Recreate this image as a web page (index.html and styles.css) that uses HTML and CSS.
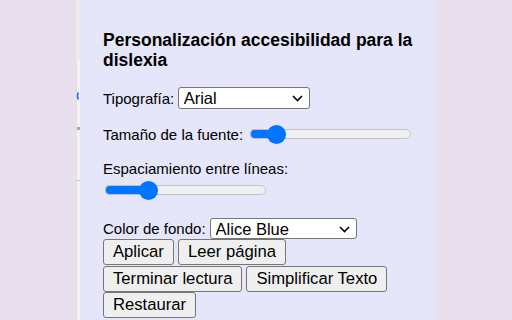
FILE: index.html
```html
<!DOCTYPE html>
<html lang="es">
<head>
<meta charset="utf-8">
<title>Personalización accesibilidad para la dislexia</title>
<link rel="stylesheet" href="styles.css">
</head>
<body>
<div class="page">
  <div class="gutter"></div>
  <div class="strip">
    <span class="strip-top"></span>
    <svg class="strip-mark" width="3" height="8" viewBox="0 0 3 8"><path d="M2.5 0.5 Q0.5 4 2.5 7.5" fill="none" stroke="#1a6ee6" stroke-width="1.6"/></svg>
    <span class="strip-tick"></span>
    <span class="strip-line"></span>
  </div>
  <main class="panel">
    <h3 class="title">Personalización accesibilidad para la dislexia</h3>

    <div class="row row-font">
      <label class="label" for="font">Tipografía:</label>
      <span class="select-wrap sel-font">
        <select id="font" class="select">
          <option>Arial</option>
          <option>Verdana</option>
          <option>OpenDyslexic</option>
        </select>
        <svg class="chev" width="11" height="7" viewBox="0 0 11 7"><path d="M1 1 L5.5 5.5 L10 1" fill="none" stroke="#000" stroke-width="1.6"/></svg>
      </span>
    </div>

    <div class="row row-size">
      <label class="label" for="size">Tamaño de la fuente:</label>
      <input id="size" class="range range-size" type="range" min="0" max="100" value="11.6" style="--p:16%">
    </div>

    <label class="label label-block" for="spacing">Espaciamiento entre líneas:</label>
    <div class="row row-spacing">
      <input id="spacing" class="range" type="range" min="0" max="100" value="24.3" style="--p:27%">
    </div>

    <div class="row row-color">
      <label class="label" for="bg">Color de fondo:</label>
      <span class="select-wrap sel-color">
        <select id="bg" class="select">
          <option>Alice Blue</option>
          <option>Beige</option>
          <option>Lavender</option>
        </select>
        <svg class="chev" width="11" height="7" viewBox="0 0 11 7"><path d="M1 1 L5.5 5.5 L10 1" fill="none" stroke="#000" stroke-width="1.6"/></svg>
      </span>
    </div>

    <div class="buttons">
      <button class="btn">Aplicar</button>
      <button class="btn">Leer página</button>
      <button class="btn">Terminar lectura</button>
      <button class="btn">Simplificar Texto</button>
      <button class="btn">Restaurar</button>
    </div>
  </main>
</div>
</body>
</html>
```
FILE: styles.css
```css
html, body {
  margin: 0;
  padding: 0;
}
body {
  background: #e8e0ec;
  font-family: "Liberation Sans", Arial, sans-serif;
  color: #000;
  width: 512px;
  height: 320px;
  overflow: hidden;
}
.page {
  display: flex;
  height: 320px;
}
.gutter {
  width: 76px;
  flex: none;
}
.strip {
  width: 4px;
  flex: none;
  position: relative;
  background: #f4f4f4;
  box-shadow: inset 1px 0 0 #e2e2e2;
}
.strip-top {
  position: absolute;
  left: 0;
  top: 0;
  width: 4px;
  height: 60px;
  background: #ebebeb;
}
.strip-mark {
  position: absolute;
  left: 0;
  top: 92px;
}
.strip-tick {
  position: absolute;
  left: 1px;
  top: 127px;
  width: 3px;
  height: 3px;
  background: #a8a8a8;
}
.strip-line {
  position: absolute;
  left: 0;
  top: 180px;
  width: 4px;
  height: 1px;
  background: #c8c8c8;
}
.panel {
  width: 356px;
  flex: none;
  box-sizing: border-box;
  padding: 30px 23px 0 23px;
  background: #e6e6fa;
  display: flex;
  flex-direction: column;
  align-items: flex-start;
}
.title {
  font-weight: bold;
  font-size: 17.5px;
  line-height: 20px;
  margin: 0 0 17px 0;
}
.row {
  display: flex;
  align-items: center;
}
.label {
  font-size: 15px;
  line-height: 17px;
  white-space: nowrap;
}
.row-font {
  height: 22px;
}
.select-wrap {
  position: relative;
  display: inline-block;
  margin-left: 3.5px;
}
.select {
  -webkit-appearance: none;
  appearance: none;
  box-sizing: border-box;
  height: 21px;
  border: 1px solid #767676;
  border-radius: 3px;
  background: #fff;
  font-family: "Liberation Sans", Arial, sans-serif;
  font-size: 16.5px;
  color: #000;
  padding: 0 0 0 5px;
  margin: 0;
  display: block;
  outline: none;
}
.sel-font .select {
  width: 132px;
  height: 22px;
}
.sel-color {
  margin-left: 4px;
}
.sel-color .select {
  width: 147px;
}
.chev {
  position: absolute;
  right: 7px;
  top: 8px;
  pointer-events: none;
}
.row-size {
  margin-top: 15px;
  height: 20px;
}
.range {
  -webkit-appearance: none;
  appearance: none;
  width: 161px;
  height: 20px;
  margin: 0;
  background: transparent;
}
.range-size {
  margin-left: 7px;
}
.range::-webkit-slider-runnable-track {
  height: 10px;
  border-radius: 5px;
  background: linear-gradient(#0075ff, #0075ff) 0 0 / var(--p) 100% no-repeat, #efefef;
  box-shadow: inset 0 0 0 1px #c2c2c2;
}
.range::-webkit-slider-thumb {
  -webkit-appearance: none;
  appearance: none;
  width: 19px;
  height: 19px;
  border-radius: 50%;
  background: #0075ff;
  border: none;
  margin-top: -4.5px;
}
.label-block {
  display: block;
  margin-top: 16px;
}
.row-spacing {
  margin-top: 3px;
  height: 20px;
  padding-left: 2px;
}
.row-color {
  margin-top: 18px;
  height: 21px;
}
.buttons {
  display: flex;
  flex-wrap: wrap;
  gap: 0.5px 4px;
  width: 310px;
  margin-top: 0;
}
.btn {
  box-sizing: border-box;
  height: 26px;
  padding: 0 9px;
  margin: 0;
  border: 1px solid #767676;
  border-radius: 3px;
  background: #efefef;
  color: #000;
  font-family: "Liberation Sans", Arial, sans-serif;
  font-size: 16.67px;
  line-height: 24px;
}
```
